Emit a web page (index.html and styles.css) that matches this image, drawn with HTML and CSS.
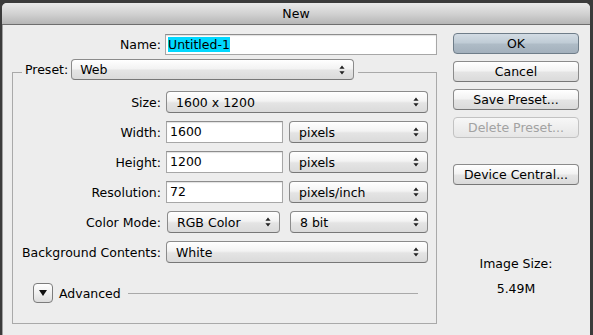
FILE: index.html
```html
<!DOCTYPE html>
<html lang="en">

<head>
    <meta charset="UTF-8">
    <title>New</title>
    <link rel="stylesheet" href="styles.css">
</head>

<body>
    <div class="window">
        <div class="titlebar">New</div>

        <div class="content">
            <div class="main">
                <div class="name-row">
                    <span class="name-label">Name:</span>
                    <div class="field name-field"><span class="selected">Untitled-1</span></div>
                </div>

                <fieldset class="group">
                    <legend class="group-head">
                        <span>Preset:</span>
                        <div class="popup preset">Web
                            <svg class="arrows" viewBox="0 0 6 10"><path d="M3 0.5L5.6 3.8H0.4Z M3 9.5L5.6 6.2H0.4Z" /></svg>
                        </div>
                    </legend>

                    <div class="form">
                        <span class="label">Size:</span>
                        <div class="popup">1600 x 1200
                            <svg class="arrows" viewBox="0 0 6 10"><path d="M3 0.5L5.6 3.8H0.4Z M3 9.5L5.6 6.2H0.4Z" /></svg>
                        </div>

                        <span class="label">Width:</span>
                        <div class="pair">
                            <div class="field">1600</div>
                            <div class="popup">pixels
                                <svg class="arrows" viewBox="0 0 6 10"><path d="M3 0.5L5.6 3.8H0.4Z M3 9.5L5.6 6.2H0.4Z" /></svg>
                            </div>
                        </div>

                        <span class="label">Height:</span>
                        <div class="pair">
                            <div class="field">1200</div>
                            <div class="popup">pixels
                                <svg class="arrows" viewBox="0 0 6 10"><path d="M3 0.5L5.6 3.8H0.4Z M3 9.5L5.6 6.2H0.4Z" /></svg>
                            </div>
                        </div>

                        <span class="label">Resolution:</span>
                        <div class="pair">
                            <div class="field">72</div>
                            <div class="popup">pixels/inch
                                <svg class="arrows" viewBox="0 0 6 10"><path d="M3 0.5L5.6 3.8H0.4Z M3 9.5L5.6 6.2H0.4Z" /></svg>
                            </div>
                        </div>

                        <span class="label">Color Mode:</span>
                        <div class="pair">
                            <div class="popup mode">RGB Color
                                <svg class="arrows" viewBox="0 0 6 10"><path d="M3 0.5L5.6 3.8H0.4Z M3 9.5L5.6 6.2H0.4Z" /></svg>
                            </div>
                            <div class="popup">8 bit
                                <svg class="arrows" viewBox="0 0 6 10"><path d="M3 0.5L5.6 3.8H0.4Z M3 9.5L5.6 6.2H0.4Z" /></svg>
                            </div>
                        </div>

                        <span class="label">Background Contents:</span>
                        <div class="popup">White
                            <svg class="arrows" viewBox="0 0 6 10"><path d="M3 0.5L5.6 3.8H0.4Z M3 9.5L5.6 6.2H0.4Z" /></svg>
                        </div>
                    </div>

                    <div class="advanced">
                        <div class="disclosure">
                            <svg viewBox="0 0 8 6"><path d="M0 0H8L4 6Z" /></svg>
                        </div>
                        <span>Advanced</span>
                        <div class="rule"></div>
                    </div>
                </fieldset>
            </div>

            <div class="side">
                <div class="button default">OK</div>
                <div class="button">Cancel</div>
                <div class="button">Save Preset...</div>
                <div class="button disabled">Delete Preset...</div>
                <div class="button device">Device Central...</div>

                <div class="info">
                    <div>Image Size:</div>
                    <div class="info-value">5.49M</div>
                </div>
            </div>
        </div>
    </div>
</body>

</html>
```

FILE: styles.css
```css
body {
    margin: 0;
    background: #3b3b3b;
    font-family: "DejaVu Sans", sans-serif;
    font-size: 12.5px;
    color: #000;
}

.window {
    margin: 3px 0 0 2px;
    width: 588px;
    height: 332px;
    background: #ededed;
    border-radius: 5px 5px 0 0;
    overflow: hidden;
    box-shadow: inset 1px 0 0 #a0a0a0;
}

.titlebar {
    height: 21px;
    line-height: 21px;
    text-align: center;
    background: linear-gradient(#e9e9e9, #d2d2d2 50%, #b6b6b6);
    border-bottom: 1px solid #6e6e6e;
}

.content {
    display: flex;
    gap: 15px;
    padding: 8px 11px 0 10px;
}

.main {
    width: 426px;
}

.name-row {
    display: flex;
    align-items: center;
    gap: 4px;
    margin-top: 1px;
}

.name-label {
    width: 149px;
    text-align: right;
}

.field {
    box-sizing: border-box;
    height: 22px;
    line-height: 20px;
    padding: 0 3px;
    background: #fff;
    border: 1px solid #a7a7a7;
    border-top-color: #8d8d8d;
    box-shadow: inset 0 1px 1px rgba(0, 0, 0, 0.12);
}

.name-field {
    width: 272px;
    height: 21px;
    padding-left: 2px;
}

.selected {
    background: #00d8ff;
}

.popup {
    box-sizing: border-box;
    height: 22px;
    display: flex;
    align-items: center;
    padding: 0 8px 0 9px;
    border: 1px solid #8b8b8b;
    border-bottom-color: #777;
    border-radius: 4px;
    background: linear-gradient(#ffffff, #f3f3f3 45%, #e4e4e4 55%, #dadada);
}

.arrows {
    width: 6px;
    height: 10px;
    margin-left: auto;
    fill: #222;
}

.group {
    margin: 4px 0 0 0;
    width: 425px;
    box-sizing: border-box;
    padding: 6px 8px 20px 9px;
    border: 1px solid #a9a9a9;
    min-width: 0;
}

.group-head {
    display: flex;
    align-items: center;
    gap: 3px;
    padding: 0 4px 5px 3px;
    margin-top: -2px;
}

.preset {
    width: 283px;
    height: 21px;
    padding-left: 8px;
}

.form {
    display: grid;
    grid-template-columns: 139px 1fr;
    column-gap: 5px;
    row-gap: 8px;
    align-items: center;
}

.label {
    text-align: right;
    white-space: nowrap;
}

.pair {
    display: flex;
    gap: 6px;
}

.pair .field {
    width: 117px;
}

.pair .popup {
    flex: 1;
}

.pair .popup.mode {
    flex: none;
    width: 113px;
    margin: 0 4px 0 1px;
}

.advanced {
    display: flex;
    align-items: center;
    margin: 20px 10px 0 11px;
}

.disclosure {
    box-sizing: border-box;
    width: 20px;
    height: 20px;
    display: flex;
    align-items: center;
    justify-content: center;
    border: 1px solid #7c7c7c;
    border-radius: 4px;
    background: linear-gradient(#ffffff, #f0f0f0 50%, #dcdcdc);
    margin-right: 6px;
}

.disclosure svg {
    width: 8px;
    height: 6px;
    fill: #111;
}

.rule {
    flex: 1;
    height: 1px;
    background: #a9a9a9;
    margin-left: 7px;
}

.side {
    width: 126px;
    display: flex;
    flex-direction: column;
    gap: 7px;
}

.button {
    box-sizing: border-box;
    height: 21px;
    line-height: 19px;
    text-align: center;
    border: 1px solid #8b8b8b;
    border-bottom-color: #777;
    border-radius: 4px;
    background: linear-gradient(#ffffff, #f3f3f3 45%, #e4e4e4 55%, #dadada);
}

.button.default {
    border-color: #6f7d89;
    background: linear-gradient(#d3dce4, #c0ccd6 45%, #aebbc6 55%, #a3b0bc);
}

.button.disabled {
    color: #a2a2a2;
    border-color: #c2c2c2;
    background: linear-gradient(#f7f7f7, #eeeeee 50%, #e6e6e6);
}

.button.device {
    margin-top: 19px;
}

.info {
    margin-top: 59px;
    text-align: center;
    line-height: 25px;
}
```
